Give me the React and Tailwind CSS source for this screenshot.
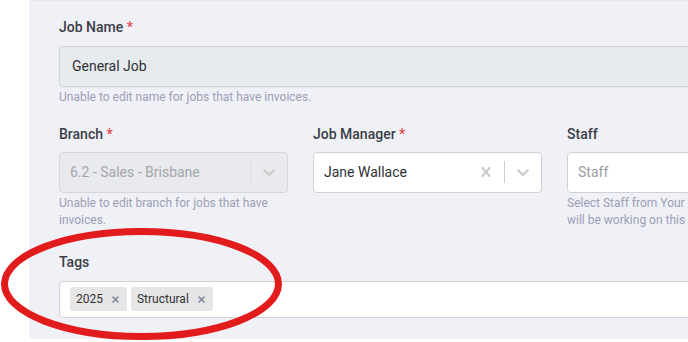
import React from 'react';

const font = { fontFamily: 'Roboto, "Liberation Sans", sans-serif' };

function Label({ children, required }) {
  return (
    <div className="text-[14px] leading-[20px] font-medium text-[#3b3d48]">
      {children}
      {required && <span className="text-[#e5484d]"> *</span>}
    </div>
  );
}

function Helper({ children }) {
  return <div className="mt-[2px] text-[12px] leading-[17.5px] text-[#9c9eb6]">{children}</div>;
}

function Chevron({ color }) {
  return (
    <svg width="20" height="20" viewBox="0 0 20 20" fill={color}>
      <path d="M4.516 7.548c0.436-0.446 1.043-0.481 1.576 0l3.908 3.747 3.908-3.747c0.533-0.481 1.141-0.446 1.574 0 0.436 0.445 0.408 1.197 0 1.615-0.406 0.418-4.695 4.502-4.695 4.502-0.217 0.223-0.502 0.335-0.787 0.335s-0.57-0.112-0.789-0.335c0 0-4.287-4.084-4.695-4.502s-0.436-1.17 0-1.615z" />
    </svg>
  );
}

function Cross({ color }) {
  return (
    <svg width="20" height="20" viewBox="0 0 20 20" fill={color}>
      <path d="M14.348 14.849c-0.469 0.469-1.229 0.469-1.697 0l-2.651-3.030-2.651 3.029c-0.469 0.469-1.229 0.469-1.697 0-0.469-0.469-0.469-1.229 0-1.697l2.758-3.15-2.759-3.152c-0.469-0.469-0.469-1.228 0-1.697s1.228-0.469 1.697 0l2.652 3.031 2.651-3.031c0.469-0.469 1.228-0.469 1.697 0s0.469 1.229 0 1.697l-2.758 3.152 2.758 3.15c0.469 0.469 0.469 1.229 0 1.698z" />
    </svg>
  );
}

function Select({ value, placeholder, disabled, clearable }) {
  return (
    <div
      className={`h-[41px] flex items-center rounded-[4px] border ${
        disabled ? 'bg-[#e8eaed] border-[#d5d7db]' : 'bg-white border-[#cfd1d6]'
      }`}
    >
      <div
        className={`flex-1 pl-[10px] text-[14px] whitespace-nowrap ${
          disabled ? 'text-[#a3a5aa]' : value ? 'text-[#2f3137]' : 'text-[#9a9ca3]'
        }`}
      >
        {value || placeholder}
      </div>
      {clearable && (
        <div className="px-[8px] flex items-center">
          <Cross color="#cccccc" />
        </div>
      )}
      <div className={`w-px h-[22px] ${disabled ? 'bg-[#dcdee2]' : 'bg-[#d0d0d0]'}`} />
      <div className="px-[8px] flex items-center">
        <Chevron color="#cccccc" />
      </div>
    </div>
  );
}

function Chip({ children }) {
  return (
    <div className="h-[24px] flex items-center bg-[#e6e6e6] rounded-[2px] pl-[6px] pr-[8px] text-[12px] text-[#333]">
      <span>{children}</span>
      <svg className="ml-[9px]" width="7" height="7" viewBox="0 0 7 7">
        <path d="M1 1L6 6M6 1L1 6" stroke="#7d829b" strokeWidth="1.5" strokeLinecap="round" />
      </svg>
    </div>
  );
}

export default function App() {
  return (
    <div className="relative w-[688px] h-[342px] bg-white overflow-hidden" style={font}>
      <div className="ml-[29px] h-[339px] bg-[#f0f1f6] border-t border-[#e7e8ed] pl-[30px] pt-[16px]">
        <div className="w-[740px]">
          <Label required>Job Name</Label>
          <div className="mt-[9px] h-[41px] flex items-center rounded-[4px] border border-[#d1d3d8] bg-[#e8ebee] pl-[12px] text-[14px] text-[#2f3137] shadow-[0_1px_2px_rgba(0,0,0,0.04)]">
            General Job
          </div>
          <Helper>Unable to edit name for jobs that have invoices.</Helper>
        </div>

        <div className="mt-[17px] grid grid-cols-[229px_229px_229px] gap-x-[25px] w-[740px]">
          <div>
            <Label required>Branch</Label>
            <div className="mt-[8px]">
              <Select value="6.2 - Sales - Brisbane" disabled />
            </div>
            <Helper>
              Unable to edit branch for jobs that have invoices.
            </Helper>
          </div>
          <div>
            <Label required>Job Manager</Label>
            <div className="mt-[8px]">
              <Select value="Jane Wallace" clearable />
            </div>
          </div>
          <div>
            <Label>Staff</Label>
            <div className="mt-[8px]">
              <Select placeholder="Staff" />
            </div>
            <Helper>
              Select Staff from Your Team who
              <br />
              will be working on this job.
            </Helper>
          </div>
        </div>

        <div className="mt-[22px] w-[740px]">
          <Label>Tags</Label>
          <div className="mt-[9px] h-[37px] flex items-center gap-[4px] rounded-[4px] border border-[#cfd1d6] bg-white pl-[10px]">
            <Chip>2025</Chip>
            <Chip>Structural</Chip>
          </div>
        </div>
      </div>

      <svg className="absolute left-0 top-0 pointer-events-none" width="688" height="342">
        <ellipse cx="141.5" cy="284" rx="137" ry="52.5" fill="none" stroke="#e21c1c" strokeWidth="7" />
      </svg>
    </div>
  );
}
